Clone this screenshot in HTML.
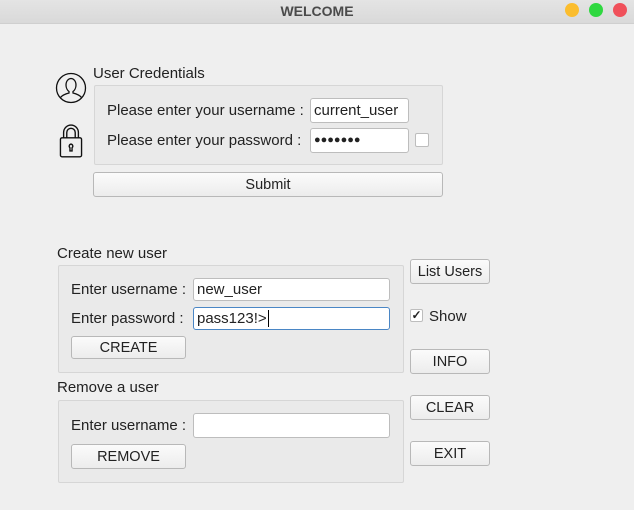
<!DOCTYPE html>
<html><head><style>
*{box-sizing:border-box;margin:0;padding:0}
body{width:634px;height:510px;background:#efefef;font-family:"Liberation Sans",sans-serif;font-size:15px;color:#222;position:relative;overflow:hidden}
.a{position:absolute}
.t{position:absolute;white-space:nowrap;line-height:18px}
.title{left:0;top:0;width:634px;height:24px;background:linear-gradient(#e4e4e4,#d9d9d9);border-bottom:1px solid #cfcfcf}
.dot{position:absolute;top:3px;width:14px;height:14px;border-radius:50%}
.grp{position:absolute;background:#eaeaea;border:1px solid #d6d6d6;border-radius:2px}
.in{position:absolute;background:#fff;border:1px solid #bdbdbd;border-radius:3px;padding-left:3px;font-size:15px}
.btn{position:absolute;background:linear-gradient(#fbfbfb,#ececec);border:1px solid #b8b8b8;border-radius:3px;text-align:center;font-size:14.5px}
.cb{position:absolute;background:#fff;border:1px solid #bdbdbd;border-radius:2px}
</style></head><body>
<div class="a title"><div class="t" style="left:0;width:634px;text-align:center;top:2px;font-weight:bold;color:#4a4a4a;font-size:14px">WELCOME</div>
<div class="dot" style="left:565px;background:#fbbd2e"></div>
<div class="dot" style="left:589px;background:#2fd840"></div>
<div class="dot" style="left:613px;background:#f0505a"></div>
</div>
<svg class="a" style="left:55px;top:72px" width="34" height="34" viewBox="0 0 34 34" fill="none" stroke="#111" stroke-width="1.3">
<circle cx="16" cy="16" r="14.5"/>
<path d="M11 13c0-4 2.5-6.5 5-6.5s5 2.5 5 6.5c0 3-1.5 5.5-3 6.5v1.5c4 1 7 2.5 8.5 4.5M11 13c0 3 1.5 5.5 3 6.5v1.5c-4 1-7 2.5-8.5 4.5"/>
</svg>
<svg class="a" style="left:57px;top:123px" width="28" height="38" viewBox="0 0 26 36" fill="none" stroke="#111" stroke-width="1.3">
<path d="M6 14V9a7 7 0 0 1 14 0v5M9 14V9a4 4 0 0 1 8 0v5"/>
<rect x="3" y="14" width="20" height="18" rx="1.5"/>
<path d="M13 20a2 2 0 0 0-1 3.5v3h2v-3a2 2 0 0 0-1-3.5z"/>
</svg>
<div class="t" style="left:93px;top:65px">User Credentials</div>
<div class="grp" style="left:94px;top:85px;width:349px;height:80px"></div>
<div class="t" style="left:107px;top:102px">Please enter your username :</div>
<div class="in" style="left:310px;top:98px;width:99px;height:25px;line-height:23px">current_user</div>
<div class="t" style="left:107px;top:132px">Please enter your password :</div>
<div class="in" style="left:310px;top:128px;width:99px;height:25px;line-height:23px;font-size:11px">●●●●●●●</div>
<div class="cb" style="left:415px;top:133px;width:14px;height:14px"></div>
<div class="btn" style="left:93px;top:172px;width:350px;height:25px;line-height:24px">Submit</div>

<div class="t" style="left:57px;top:245px">Create new user</div>
<div class="grp" style="left:58px;top:265px;width:346px;height:108px"></div>
<div class="t" style="left:71px;top:281px">Enter username :</div>
<div class="in" style="left:193px;top:278px;width:197px;height:23px;line-height:21px">new_user</div>
<div class="t" style="left:71px;top:310px">Enter password :</div>
<div class="in" style="left:193px;top:307px;width:197px;height:23px;line-height:21px;border-color:#4a86c5">pass123!&gt;<span style="border-left:1px solid #000;margin-left:1px"></span></div>
<div class="btn" style="left:71px;top:336px;width:115px;height:23px;line-height:22px">CREATE</div>

<div class="t" style="left:57px;top:379px">Remove a user</div>
<div class="grp" style="left:58px;top:400px;width:346px;height:83px"></div>
<div class="t" style="left:71px;top:417px">Enter username :</div>
<div class="in" style="left:193px;top:413px;width:197px;height:25px"></div>
<div class="btn" style="left:71px;top:444px;width:115px;height:25px;line-height:24px">REMOVE</div>

<div class="btn" style="left:410px;top:259px;width:80px;height:25px;line-height:24px">List Users</div>
<div class="cb" style="left:410px;top:309px;width:13px;height:13px;font-size:12px;line-height:11px;text-align:center;font-weight:bold">✓</div>
<div class="t" style="left:429px;top:308px">Show</div>
<div class="btn" style="left:410px;top:349px;width:80px;height:25px;line-height:24px">INFO</div>
<div class="btn" style="left:410px;top:395px;width:80px;height:25px;line-height:24px">CLEAR</div>
<div class="btn" style="left:410px;top:441px;width:80px;height:25px;line-height:24px">EXIT</div>
</body></html>
